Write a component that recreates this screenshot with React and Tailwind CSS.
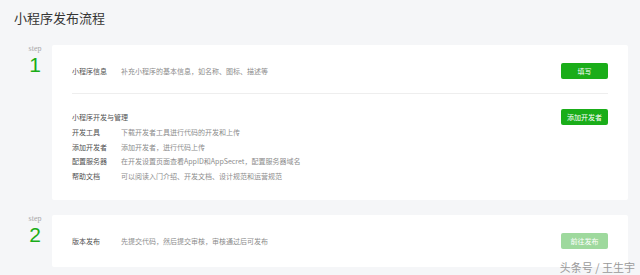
const STEP1_TOOLS = [
  { label: '开发工具', desc: '下载开发者工具进行代码的开发和上传' },
  { label: '添加开发者', desc: '添加开发者，进行代码上传' },
  { label: '配置服务器', desc: '在开发设置页面查看AppID和AppSecret，配置服务器域名' },
  { label: '帮助文档', desc: '可以阅读入门介绍、开发文档、设计规范和运营规范' },
];

function StepLabel({ num }) {
  return (
    <div className="w-[52px] shrink-0 pl-[18px] -mt-[1px] flex flex-col items-center">
      <span className="font-['Liberation_Serif',serif] text-[8px] leading-[9px] text-[#a8a8a8]">step</span>
      <span className="font-['Liberation_Sans',sans-serif] text-[21px] leading-[24px] text-[#1aad19]">{num}</span>
    </div>
  );
}

function GreenButton({ children, disabled }) {
  return (
    <button
      className={`w-[47px] h-[16px] rounded-[2px] text-[7px] leading-[16px] text-white ${
        disabled ? 'bg-[#9ed99d]' : 'bg-[#1aad19]'
      }`}
    >
      {children}
    </button>
  );
}

export default function App() {
  return (
    <div className="relative w-[640px] h-[275px] overflow-hidden bg-[#f5f6f8] font-['Noto_Sans_CJK_SC','Liberation_Sans',sans-serif]">
      <h1 className="pl-[14px] pt-[10px] text-[13px] leading-[16px] text-[#353535]">小程序发布流程</h1>

      <div className="mt-[19px] pr-[12px] flex flex-col gap-[15px]">
        {/* step 1 */}
        <div className="flex">
          <StepLabel num="1" />
          <div className="flex-1 bg-white rounded-[2px] px-[20px] pb-[16px]">
            <div className="h-[48px] pt-[4px] flex items-center justify-between">
              <div className="flex items-center text-[7px]">
                <span className="w-[49px] text-[#505050]">小程序信息</span>
                <span className="text-[#8c8c8c]">补充小程序的基本信息，如名称、图标、描述等</span>
              </div>
              <GreenButton>填写</GreenButton>
            </div>
            <div className="border-t border-[#eeeeee]" />
            <div className="pt-[15px] h-[31px] flex items-center justify-between">
              <span className="text-[7px] text-[#505050]">小程序开发与管理</span>
              <GreenButton>添加开发者</GreenButton>
            </div>
            <div className="flex flex-col">
              {STEP1_TOOLS.map((t) => (
                <div key={t.label} className="h-[14.7px] flex items-center text-[7px]">
                  <span className="w-[49px] text-[#505050]">{t.label}</span>
                  <span className="text-[#8c8c8c]">{t.desc}</span>
                </div>
              ))}
            </div>
          </div>
        </div>

        {/* step 2 */}
        <div className="flex">
          <StepLabel num="2" />
          <div className="flex-1 bg-white rounded-[2px] px-[20px] h-[52px] flex items-center justify-between">
            <div className="flex items-center text-[7px]">
              <span className="w-[49px] text-[#505050]">版本发布</span>
              <span className="text-[#8c8c8c]">先提交代码，然后提交审核，审核通过后可发布</span>
            </div>
            <GreenButton disabled>前往发布</GreenButton>
          </div>
        </div>
      </div>

      <span className="absolute right-[5px] bottom-[1px] text-[11px] leading-[14px] text-[#9a9a9a]">头条号 / 王生宇</span>
    </div>
  );
}
